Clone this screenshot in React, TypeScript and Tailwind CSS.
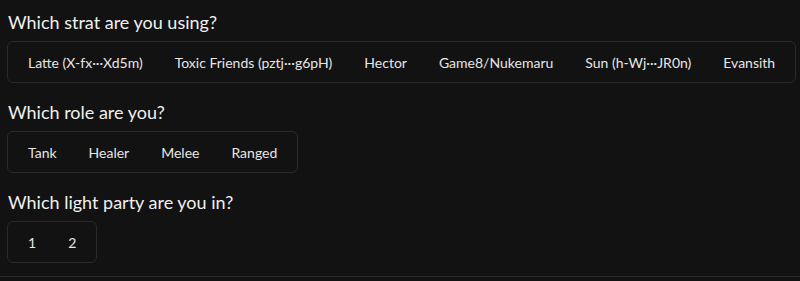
import React from "react";

const sections = [
  {
    title: "Which strat are you using?",
    items: [
      "Latte (X-fx···Xd5m)",
      "Toxic Friends (pztj···g6pH)",
      "Hector",
      "Game8/Nukemaru",
      "Sun (h-Wj···JR0n)",
      "Evansith",
    ],
  },
  { title: "Which role are you?", items: ["Tank", "Healer", "Melee", "Ranged"] },
  { title: "Which light party are you in?", items: ["1", "2"] },
];

export default function App() {
  return (
    <div
      className="w-[800px] h-[281px] bg-[#121212] text-[#ececec]"
      style={{ fontFamily: 'Lato, "Open Sans", sans-serif' }}
    >
      <div className="px-[7px] pt-2 pb-[13px] border-b border-[#2a2a2a] flex flex-col gap-[15px]">
        {sections.map((s) => (
          <div key={s.title} className="flex flex-col items-start gap-[5px]">
            <div className="text-[18px] leading-7 px-[1px] text-[#f0f0f0]">{s.title}</div>
            <div className="flex border border-[#2a2a2a] rounded-md p-1">
              {s.items.map((it) => (
                <div key={it} className="h-8 px-4 flex items-center text-[14px] text-[#e6e6e6] whitespace-nowrap">
                  {it}
                </div>
              ))}
            </div>
          </div>
        ))}
      </div>
    </div>
  );
}
